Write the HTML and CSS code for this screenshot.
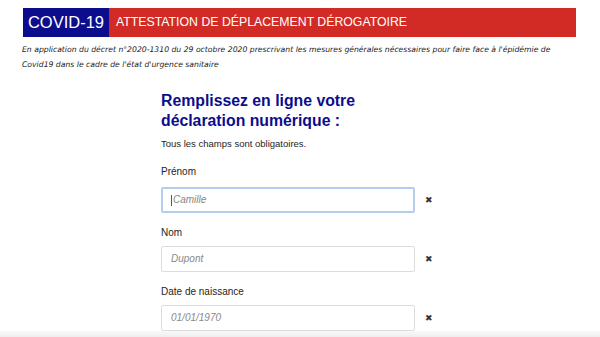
FILE: index.html
```html
<!DOCTYPE html>
<html lang="fr">
<head>
<meta charset="utf-8">
<link rel="stylesheet" href="styles.css">
</head>
<body>
<header class="banner">
  <div class="banner-covid">COVID-19</div>
  <div class="banner-title">Attestation de déplacement dérogatoire</div>
</header>
<p class="decree">En application du décret n°2020-1310 du 29 octobre 2020 prescrivant les mesures générales nécessaires pour faire face à l'épidémie de Covid19 dans le cadre de l'état d'urgence sanitaire</p>
<main class="form">
  <h1 class="form-title">Remplissez en ligne votre<br>déclaration numérique :</h1>
  <p class="form-note">Tous les champs sont obligatoires.</p>
  <div class="field">
    <label class="field-label">Prénom</label>
    <div class="field-row">
      <div class="input focused"><span class="caret"></span>Camille</div>
      <span class="clear">&#x2716;</span>
    </div>
  </div>
  <div class="field">
    <label class="field-label">Nom</label>
    <div class="field-row">
      <div class="input">Dupont</div>
      <span class="clear">&#x2716;</span>
    </div>
  </div>
  <div class="field">
    <label class="field-label">Date de naissance</label>
    <div class="field-row">
      <div class="input">01/01/1970</div>
      <span class="clear">&#x2716;</span>
    </div>
  </div>
</main>
<div class="bottom-fade"></div>
</body>
</html>
```
FILE: styles.css
```css
html, body {
  margin: 0;
  padding: 0;
  background: #fff;
  font-family: "Liberation Sans", Arial, sans-serif;
  color: #1e1e1e;
  overflow: hidden;
  height: 337px;
}
.banner {
  display: flex;
  height: 29px;
  margin: 8px 24px 0 23px;
}
.banner-covid {
  width: 86px;
  background: #0c0d8c;
  color: #fff;
  font-size: 16.5px;
  line-height: 29px;
  text-align: center;
}
.banner-title {
  flex: 1;
  background: #d22b26;
  color: #fff;
  font-size: 12.3px;
  line-height: 29px;
  padding-left: 7px;
  text-transform: uppercase;
}
.decree {
  margin: 5px 0 0 22px;
  width: 545px;
  font-family: "DejaVu Sans", Verdana, sans-serif;
  font-size: 7.7px;
  font-style: italic;
  line-height: 15px;
  color: #222;
}
.form {
  margin: 19px 0 0 161px;
  width: 290px;
}
.form-title {
  margin: 0;
  font-size: 15.8px;
  line-height: 20px;
  font-weight: bold;
  color: #0c0d8c;
}
.form-note {
  margin: 7px 0 0;
  font-size: 9.5px;
  line-height: 12px;
}
.field {
  margin-top: 16px;
}
.field + .field {
  margin-top: 14px;
}
.field-label {
  display: block;
  font-size: 10px;
  line-height: 12px;
  margin-bottom: 9px;
}
.field + .field .field-label {
  margin-top: 1px;
  margin-bottom: 7px;
}
.field-row {
  display: flex;
  align-items: center;
}
.input {
  box-sizing: border-box;
  width: 254px;
  height: 26px;
  border: 1px solid #dcdcdc;
  border-radius: 2px;
  padding-left: 9px;
  font-size: 10px;
  font-style: italic;
  line-height: 24px;
  color: #888;
  display: flex;
  align-items: center;
}
.input.focused {
  border: 2px solid #b5cdee;
  padding-left: 8px;
}
.caret {
  display: inline-block;
  width: 1px;
  height: 11px;
  background: #555;
  margin-right: 1px;
}
.clear {
  margin-left: 10px;
  font-size: 9px;
  color: #333;
}
.bottom-fade {
  position: fixed;
  left: 0;
  right: 0;
  bottom: 0;
  height: 6px;
  background: linear-gradient(#fafafa, #eeeeee);
}
```
